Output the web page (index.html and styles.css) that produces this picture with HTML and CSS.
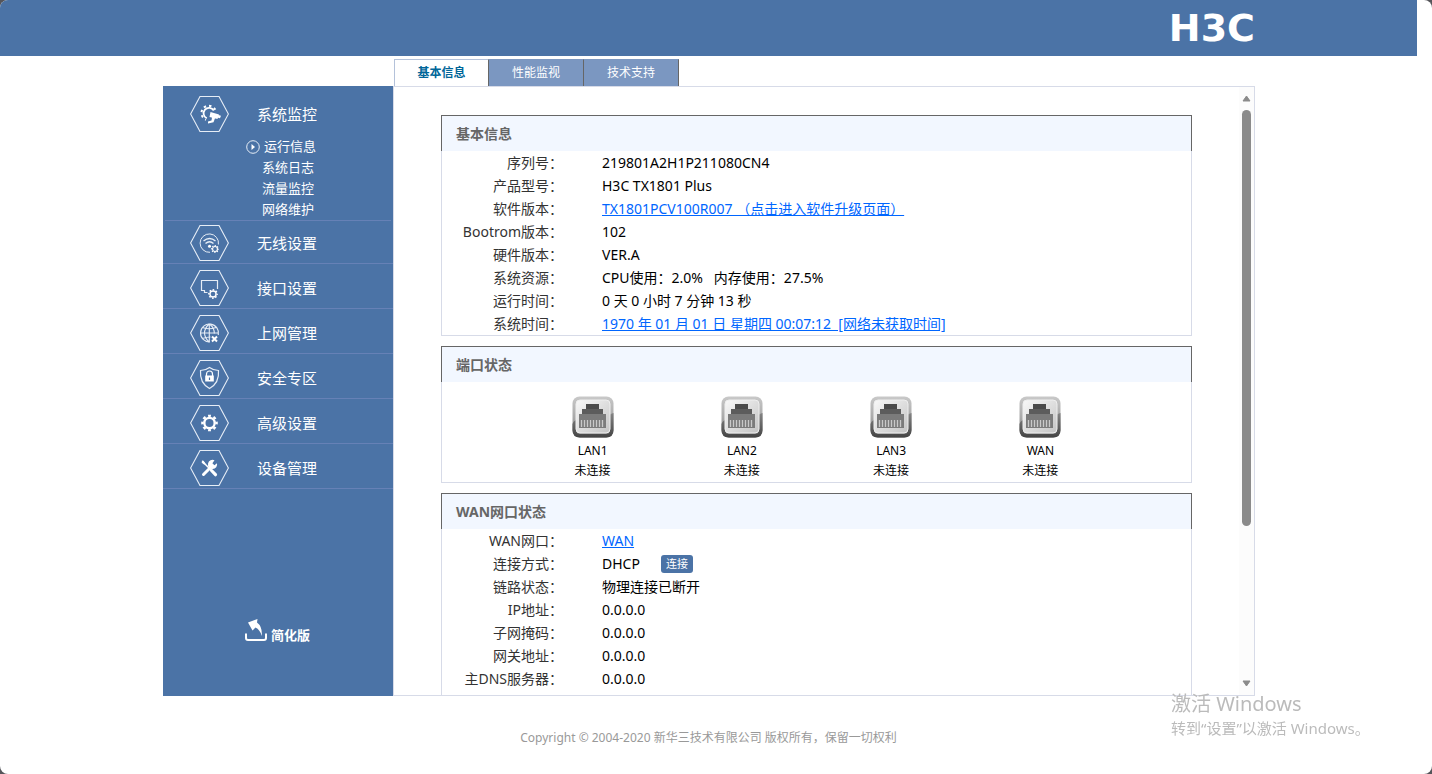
FILE: index.html
```html
<!DOCTYPE html>
<html lang="zh-CN">

<head>
  <meta charset="utf-8">
  <title>H3C</title>
  <link rel="stylesheet" href="styles.css">
</head>

<body>
  <svg class="defs" aria-hidden="true">
    <symbol id="hex" viewBox="0 0 39 36">
      <path d="M.6 18 10 .5h19L38.400 18 29 35.500H10z" fill="none" stroke="#e6edf6" stroke-width="1.100" />
    </symbol>
    <symbol id="gear" viewBox="0 0 18 18">
      <circle cx="9" cy="9" r="5.500" fill="none" stroke="#fff" stroke-width="2.500" />
      <circle cx="9" cy="9" r="7.500" fill="none" stroke="#fff" stroke-width="2.600" pathLength="16" stroke-dasharray="1 1" stroke-dashoffset=".5" />
    </symbol>
    <symbol id="port" viewBox="0 0 42 42">
      <rect x=".5" y=".5" width="41" height="41" rx="7" fill="url(#rim)" />
      <path d="M.5 28c1-3 3-4 4-4v11q0 3 3 3h27q3 0 3-3V19c1-1 3-2 4-2v17q0 7.500-7.500 7.500H8Q.5 41.500.5 34z" fill="url(#rimDark)" />
      <rect x="4" y="4" width="34" height="33" rx="4" fill="url(#face)" stroke="#eee" />
      <path d="M14 8h13v5h4v5h3v14H7V18h3v-5h4z" fill="#7b7b7b" />
      <path d="M14 8h13v5H14z" fill="#4a4a4a" />
      <path d="M10 13h21v5H10z" fill="#5c5c5c" />
      <path d="M9.500 24v7M12.500 24v7M15.500 24v7M18.500 24v7M21.500 24v7M24.500 24v7M27.500 24v7M30.500 24v7" stroke="#c9c9c9" stroke-width="1.300" />
    </symbol>
    <linearGradient id="rim" x1="0" y1="0" x2="0" y2="1">
      <stop offset="0" stop-color="#c9c9c9" />
      <stop offset=".5" stop-color="#aaa" />
      <stop offset="1" stop-color="#777" />
    </linearGradient>
    <linearGradient id="rimDark" x1="0" y1="0" x2="0" y2="1">
      <stop offset="0" stop-color="#858585" />
      <stop offset="1" stop-color="#444" />
    </linearGradient>
    <linearGradient id="face" x1="0" y1="0" x2="1" y2="1">
      <stop offset="0" stop-color="#f8f8f8" />
      <stop offset="1" stop-color="#c4c4c4" />
    </linearGradient>
  </svg>

  <div class="page">
    <header class="header">
      <div class="wrap">
        <div class="logo">H3C</div>
      </div>
    </header>

    <div class="wrap main">
      <nav class="tabs">
        <a class="tab selected" href="#">基本信息</a>
        <a class="tab" href="#">性能监视</a>
        <a class="tab" href="#">技术支持</a>
      </nav>

      <div class="frame">
        <aside class="sidebar">
          <ul class="menu">
            <li class="open">
              <a class="menu-item" href="#">
                <svg class="menu-icon" viewBox="0 0 39 36">
                  <use href="#hex" width="39" height="36" />
                  <path d="M23.800 14.500a5.500 5.500 0 1 0-7 7.800" fill="none" stroke="#fff" stroke-width="1.800" />
                  <path d="M25.300 13.800a7.300 7.300 0 1 0-9.300 10" fill="none" stroke="#fff" stroke-width="2" stroke-dasharray="2.400 3" />
                  <path d="m20.500 16 8.500 2.500-1.500 4.500-8-2zM28.500 19l2.500.8-1 2.500-2-.5zM22 21.500l3 .8-1.500 4-5.500 1.300v-2l3.500-1z" fill="#fff" />
                </svg>
                <span>系统监控</span>
              </a>
              <ul class="submenu">
                <li>
                  <a class="current" href="#">
                    <svg class="play" viewBox="0 0 14 14">
                      <circle cx="7" cy="7" r="6.300" fill="none" stroke="#e6edf6" />
                      <path d="m5.500 4 3.500 3-3.500 3z" fill="#fff" />
                    </svg>
                    <span>运行信息</span>
                  </a>
                </li>
                <li><a href="#">系统日志</a></li>
                <li><a href="#">流量监控</a></li>
                <li><a href="#">网络维护</a></li>
              </ul>
            </li>
            <li>
              <a class="menu-item" href="#">
                <svg class="menu-icon" viewBox="0 0 39 36">
                  <use href="#hex" width="39" height="36" />
                  <g fill="none" stroke="#e6edf6">
                    <path d="M20 27.300a9.200 9.200 0 1 1 8.400-7.800" />
                    <path d="M13.500 16q6-5 12 0M15.500 18.500q4-3.500 8 0" stroke-width="1.400" />
                  </g>
                  <circle cx="19.500" cy="21.300" r="1.500" fill="#fff" />
                  <use href="#gear" x="21" y="20" width="8" height="8" />
                </svg>
                <span>无线设置</span>
              </a>
            </li>
            <li>
              <a class="menu-item" href="#">
                <svg class="menu-icon" viewBox="0 0 39 36">
                  <use href="#hex" width="39" height="36" />
                  <path d="M27.500 19v-8.500h-16v10h3v2h3" fill="none" stroke="#e6edf6" stroke-width="1.200" />
                  <use href="#gear" x="18" y="19" width="10" height="10" />
                </svg>
                <span>接口设置</span>
              </a>
            </li>
            <li>
              <a class="menu-item" href="#">
                <svg class="menu-icon" viewBox="0 0 39 36">
                  <use href="#hex" width="39" height="36" />
                  <g fill="none" stroke="#e6edf6" stroke-width="1.100">
                    <path d="M20 27a9 9 0 1 1 8.300-7M10.500 18h18M12.500 12.500q6.500 2.500 13.500 0M12.500 23.500q4-1.500 8-1.500" />
                    <path d="M19.300 9v18M19 9q-9 9 0 18M19.500 9q5 4 4.800 9.500" />
                    <path d="m22 21.500 5 5M27 21.500l-5 5" stroke="#fff" stroke-width="2" />
                  </g>
                </svg>
                <span>上网管理</span>
              </a>
            </li>
            <li>
              <a class="menu-item" href="#">
                <svg class="menu-icon" viewBox="0 0 39 36">
                  <use href="#hex" width="39" height="36" />
                  <path d="M19.500 7.500q4 3 9 3 1 12.500-9 18-10-5.500-9-18 5 0 9-3z" fill="none" stroke="#e6edf6" stroke-width="1.200" />
                  <path d="M16.500 16v-2a3 3 0 0 1 6 0v2" fill="none" stroke="#fff" stroke-width="1.200" />
                  <path d="M15.200 15.500h8.600v6h-8.600z" fill="#fff" />
                  <path d="M19.500 17.500v2.500" stroke="#4b73a6" stroke-width="1.200" />
                </svg>
                <span>安全专区</span>
              </a>
            </li>
            <li>
              <a class="menu-item" href="#">
                <svg class="menu-icon" viewBox="0 0 39 36">
                  <use href="#hex" width="39" height="36" />
                  <use href="#gear" x="11" y="9" width="17" height="18" />
                </svg>
                <span>高级设置</span>
              </a>
            </li>
            <li>
              <a class="menu-item" href="#">
                <svg class="menu-icon" viewBox="0 0 39 36">
                  <use href="#hex" width="39" height="36" />
                  <path d="m12.500 11.500 10 10" stroke="#fff" stroke-width="1.500" />
                  <path d="m12 10.500 1.500.3 2 2.700-1.200 1.200-2.600-2z" fill="#fff" />
                  <path d="m21.500 20.500 4 4.200" stroke="#fff" stroke-width="3.200" stroke-linecap="round" />
                  <path d="m13.500 24.500 8.500-8.500" stroke="#fff" stroke-width="3" stroke-linecap="round" />
                  <path d="M24.500 10.300a4.600 4.600 0 1 0 2.500 3l-2.600 2-2-2z" fill="#fff" />
                </svg>
                <span>设备管理</span>
              </a>
            </li>
          </ul>
          <a class="simple" href="#">
            <svg class="simple-icon" viewBox="0 0 22 22">
              <path d="M1 14.500V19q0 2 2 2h16q2 0 2-2v-4.500" fill="none" stroke="#fff" stroke-width="2" />
              <path d="M3 3.500 12.500 0 12 3.500q5.500 4 4.800 13.500Q15 10.500 10.500 8.500l-3 3z" fill="#fff" />
            </svg>
            <span>简化版</span>
          </a>
        </aside>

        <main class="content">
          <div class="scroll">
            <section class="panel">
              <h2>基本信息</h2>
              <table class="info">
                <tr><th>序列号：</th><td>219801A2H1P211080CN4</td></tr>
                <tr><th>产品型号：</th><td>H3C TX1801 Plus</td></tr>
                <tr><th>软件版本：</th><td><a href="#">TX1801PCV100R007 （点击进入软件升级页面）</a></td></tr>
                <tr><th>Bootrom版本：</th><td>102</td></tr>
                <tr><th>硬件版本：</th><td>VER.A</td></tr>
                <tr><th>系统资源：</th><td>CPU使用：2.0% &nbsp; 内存使用：27.5%</td></tr>
                <tr><th>运行时间：</th><td>0 天 0 小时 7 分钟 13 秒</td></tr>
                <tr><th>系统时间：</th><td><a href="#">1970 年 01 月 01 日 星期四 00:07:12 &nbsp;[网络未获取时间]</a></td></tr>
              </table>
            </section>

            <section class="panel">
              <h2>端口状态</h2>
              <div class="ports">
                <div class="port"><svg><use href="#port" /></svg><span>LAN1</span><span>未连接</span></div>
                <div class="port"><svg><use href="#port" /></svg><span>LAN2</span><span>未连接</span></div>
                <div class="port"><svg><use href="#port" /></svg><span>LAN3</span><span>未连接</span></div>
                <div class="port"><svg><use href="#port" /></svg><span>WAN</span><span>未连接</span></div>
              </div>
            </section>

            <section class="panel wan">
              <h2>WAN网口状态</h2>
              <table class="info">
                <tr><th>WAN网口：</th><td><a href="#">WAN</a></td></tr>
                <tr><th>连接方式：</th><td><div class="mode">DHCP <button type="button">连接</button></div></td></tr>
                <tr><th>链路状态：</th><td>物理连接已断开</td></tr>
                <tr><th>IP地址：</th><td>0.0.0.0</td></tr>
                <tr><th>子网掩码：</th><td>0.0.0.0</td></tr>
                <tr><th>网关地址：</th><td>0.0.0.0</td></tr>
                <tr><th>主DNS服务器：</th><td>0.0.0.0</td></tr>
              </table>
            </section>
          </div>
          <div class="scrollbar">
            <svg class="arrow" viewBox="0 0 9 7"><path d="M4.500 1 8 6H1z" /></svg>
            <div class="track"><div class="thumb"></div></div>
            <svg class="arrow" viewBox="0 0 9 7"><path d="M4.500 6 1 1h7z" /></svg>
          </div>
        </main>
      </div>
    </div>

    <footer class="footer">Copyright © 2004-2020 新华三技术有限公司 版权所有，保留一切权利</footer>
  </div>

  <div class="activate">
    <p class="activate-title">激活 Windows</p>
    <p>转到“设置”以激活 Windows。</p>
  </div>
</body>

</html>
```

FILE: styles.css
```css
* {
  margin: 0;
  padding: 0;
  box-sizing: border-box;
}

html {
  height: 100%;
  background: #55555a;
}

body {
  height: 100%;
  overflow: hidden;
  border-radius: 8px;
  background: #fff;
  color: #000;
  font-family: "Noto Sans", "Noto Sans CJK SC", sans-serif;
  font-size: 14px;
}

ul {
  list-style: none;
}

svg {
  display: block;
  flex: none;
}

.defs {
  position: absolute;
  width: 0;
  height: 0;
}

.page {
  display: flex;
  flex-direction: column;
  height: 100%;
  margin-right: 15px;
}

.wrap {
  width: 100%;
  max-width: 1093px;
  margin: 0 auto;
  padding-left: 1px;
}

.header {
  flex: none;
  background: #4b73a6;
}

.logo {
  height: 56px;
  color: #fff;
  font: bold 38px/56px "DejaVu Sans", sans-serif;
  text-align: right;
}

.main {
  display: flex;
  flex: 1;
  flex-direction: column;
  min-height: 0;
}

/* tabs */

.tabs {
  display: flex;
  flex: none;
  padding: 3px 0 0 231px;
}

.tab {
  width: 95px;
  height: 27px;
  border-top: 1px solid #7b97c1;
  border-right: 1px solid #666;
  background: #7b97c1;
  color: #fff;
  font-size: 12px;
  line-height: 26px;
  text-align: center;
  text-decoration: none;
}

.tab.selected {
  border-top-color: #b4c2da;
  border-left: 1px solid #b4c2da;
  background: #fff;
  color: #069;
  font-weight: bold;
}

.frame {
  display: flex;
  flex: 1;
  min-height: 0;
}

/* sidebar */

.sidebar {
  flex: none;
  width: 230px;
  background: #4b73a6;
}

.sidebar a {
  color: #fff;
  text-decoration: none;
}

.menu-item {
  display: flex;
  align-items: center;
  gap: 28px;
  padding: 6px 0 2px 27px;
  border-bottom: 1px solid #6681b6;
  font-size: 15px;
  line-height: 20px;
}

.menu-icon {
  width: 39px;
  height: 36px;
}

.open .menu-item {
  padding: 10px 0 0 27px;
  border: 0;
}

.open + li .menu-item {
  padding-top: 4px;
}

.submenu {
  margin: 0 2px;
  padding: 4px 0 0 97px;
  border-bottom: 1px solid #6681b6;
  font-size: 13px;
  line-height: 21px;
}

.submenu a {
  display: block;
}

.submenu .current {
  display: flex;
  align-items: center;
  gap: 4px;
  margin-left: -16px;
}

.play {
  width: 14px;
  height: 14px;
}

.simple {
  display: flex;
  align-items: flex-end;
  gap: 4px;
  margin-top: 130px;
  padding-left: 82px;
  font-size: 13px;
  font-weight: bold;
  line-height: 12px;
}

.simple-icon {
  width: 22px;
  height: 22px;
}

/* content */

.content {
  display: flex;
  flex: 1;
  border: 1px solid #d7dbe8;
}

.scroll {
  flex: 1;
  overflow: hidden;
  padding: 28px 47px 0;
}

.panel {
  margin-bottom: 10px;
  border-bottom: 1px solid #d7dbe8;
}

.panel h2 {
  height: 36px;
  padding-left: 14px;
  border: 1px solid #666;
  border-bottom: 0;
  background: #f2f7ff;
  color: #666;
  font-size: 14px;
  line-height: 36px;
}

.info,
.ports {
  width: 100%;
  border: 1px solid #d7dbe8;
  border-width: 0 1px;
}

.info {
  border-spacing: 0;
}

.info th,
.info td {
  height: 23px;
  line-height: 23px;
}

.info th {
  width: 121px;
  color: #333;
  font-weight: normal;
  text-align: right;
  white-space: nowrap;
}

.info td {
  padding-left: 39px;
}

.info a {
  color: #06f;
}

.mode {
  display: flex;
  align-items: center;
  gap: 21px;
}

.mode button {
  width: 32px;
  height: 18px;
  border: 0;
  border-radius: 3px;
  background: #4b73a6;
  color: #fff;
  font: 11px/18px "Noto Sans", "Noto Sans CJK SC", sans-serif;
}

.ports {
  display: grid;
  grid-template-columns: repeat(4, 1fr);
  padding: 14px 76px 1px;
}

.port {
  display: flex;
  flex-direction: column;
  align-items: center;
  font-size: 12px;
  line-height: 20px;
}

.port svg {
  width: 42px;
  height: 42px;
  margin-bottom: 3px;
}

.wan {
  border-bottom: 0;
}

.wan .info {
  padding-bottom: 23px;
}

.scrollbar {
  display: flex;
  flex: none;
  flex-direction: column;
  align-items: center;
  width: 15px;
  padding: 8px 0;
  background: #fcfcfc;
}

.arrow {
  width: 9px;
  height: 7px;
  fill: #8b8b8b;
  stroke: #8b8b8b;
  stroke-linejoin: round;
}

.track {
  flex: 1;
  width: 9px;
  padding: 8px 0;
}

.thumb {
  height: 74%;
  border-radius: 5px;
  background: #8b8b8b;
}

.footer {
  flex: none;
  height: 78px;
  padding-top: 32px;
  color: #999;
  font-size: 12px;
  line-height: 20px;
  text-align: center;
}

/* desktop watermark, floats over the page */

.activate {
  position: fixed;
  right: 62px;
  bottom: 34px;
  width: 199px;
  color: #bbb;
  font-size: 15px;
  line-height: 24px;
  white-space: nowrap;
  pointer-events: none;
}

.activate-title {
  font-size: 20px;
}
```
